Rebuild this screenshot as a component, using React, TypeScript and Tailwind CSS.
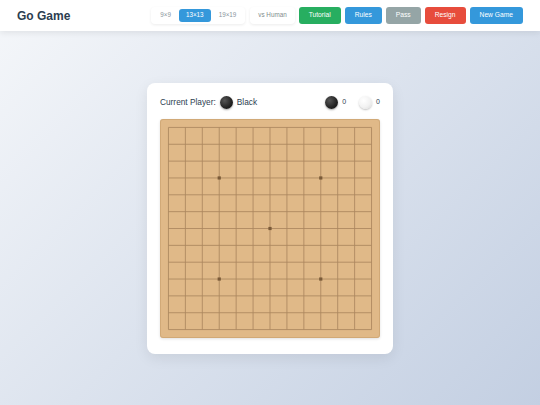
import React from "react";

const N = 13;
const SIZE = 220;
const CELL = SIZE / N;

function Board() {
  const lines = [];
  for (let i = 0; i < N; i++) {
    const p = CELL / 2 + i * CELL;
    lines.push(
      <line key={"h" + i} x1={CELL / 2} y1={p} x2={SIZE - CELL / 2} y2={p} stroke="#ab875e" strokeWidth={0.85} />
    );
    lines.push(
      <line key={"v" + i} x1={p} y1={CELL / 2} x2={p} y2={SIZE - CELL / 2} stroke="#ab875e" strokeWidth={0.85} />
    );
  }
  const stars = [
    [3, 3],
    [9, 3],
    [6, 6],
    [3, 9],
    [9, 9],
  ];
  return (
    <div className="w-[220px] h-[219px] rounded-[3px] bg-[#e0b988] shadow-[inset_0_0_0_1px_rgba(180,140,90,0.35),0_1px_3px_rgba(0,0,0,0.12)]">
      <svg width={220} height={219} viewBox="0 0 220 220" preserveAspectRatio="none">
        {lines}
        {stars.map(([x, y]) => (
          <rect
            key={x + "-" + y}
            x={CELL / 2 + x * CELL - 1.6}
            y={CELL / 2 + y * CELL - 1.6}
            width={3.2}
            height={3.2}
            fill="#7a5a38"
          />
        ))}
      </svg>
    </div>
  );
}

function Stone({ color }: { color: "black" | "white" }) {
  if (color === "black") {
    return (
      <div className="w-[13px] h-[13px] rounded-full bg-[radial-gradient(circle_at_35%_35%,#555_0%,#222_60%,#111_100%)] shadow-[0_1px_2px_rgba(0,0,0,0.35)]" />
    );
  }
  return (
    <div className="w-[13px] h-[13px] rounded-full bg-[radial-gradient(circle_at_35%_35%,#ffffff_0%,#f2f2f2_55%,#d8d8d8_100%)] shadow-[0_1px_2px_rgba(0,0,0,0.25)]" />
  );
}

export default function App() {
  return (
    <div
      className="min-h-[405px] w-full flex flex-col bg-[linear-gradient(135deg,#f5f7fa_0%,#c3cfe2_100%)] text-[#2c3e50]"
      style={{ fontFamily: '"Liberation Sans", Arial, sans-serif' }}
    >
      <header className="h-[31px] bg-white shadow-[0_2px_6px_rgba(0,0,0,0.08)] flex items-center justify-between px-[17px] shrink-0">
        <h1 className="text-[12px] font-bold text-[#2c3e50] leading-none">Go Game</h1>
        <div className="flex items-center gap-[4px]">
          <div className="flex items-center gap-[1px] h-[17px] px-[2px] bg-white rounded-[4px] shadow-[0_1px_3px_rgba(0,0,0,0.08)] mr-[1px]">
            <button className="h-[13px] px-[7px] rounded-[3px] text-[6.3px] text-[#8a959c] leading-none">9×9</button>
            <button className="h-[13px] px-[7px] rounded-[3px] text-[6.3px] text-white bg-[#3498db] leading-none">13×13</button>
            <button className="h-[13px] px-[7px] rounded-[3px] text-[6.3px] text-[#8a959c] leading-none">19×19</button>
          </div>
          <button className="h-[17px] px-[8px] rounded-[4px] bg-white shadow-[0_1px_3px_rgba(0,0,0,0.08)] text-[6.3px] text-[#7f8c8d] leading-none">vs Human</button>
          <button className="h-[17.5px] px-[10px] rounded-[3px] bg-[#27ae60] text-white text-[6.7px] leading-none">Tutorial</button>
          <button className="h-[17.5px] px-[10px] rounded-[3px] bg-[#3498db] text-white text-[6.7px] leading-none">Rules</button>
          <button className="h-[17.5px] px-[10px] rounded-[3px] bg-[#95a5a6] text-white text-[6.7px] leading-none">Pass</button>
          <button className="h-[17.5px] px-[10px] rounded-[3px] bg-[#e74c3c] text-white text-[6.7px] leading-none">Resign</button>
          <button className="h-[17.5px] px-[10px] rounded-[3px] bg-[#3498db] text-white text-[6.7px] leading-none">New Game</button>
        </div>
      </header>
      <main className="flex-1 flex items-center justify-center">
        <div className="bg-white rounded-[8px] shadow-[0_4px_14px_rgba(0,0,0,0.08)] px-[13px] pt-[14px] pb-[16px]">
          <div className="flex items-center justify-between h-[12px] mb-[10px]">
            <div className="flex items-center gap-[4px] text-[8.3px] text-[#2c3e50]">
              <span>Current Player:</span>
              <Stone color="black" />
              <span>Black</span>
            </div>
            <div className="flex items-center text-[7px] text-[#2c3e50]">
              <Stone color="black" />
              <span className="ml-[4px] mr-[13px]">0</span>
              <Stone color="white" />
              <span className="ml-[4px]">0</span>
            </div>
          </div>
          <Board />
        </div>
      </main>
    </div>
  );
}
